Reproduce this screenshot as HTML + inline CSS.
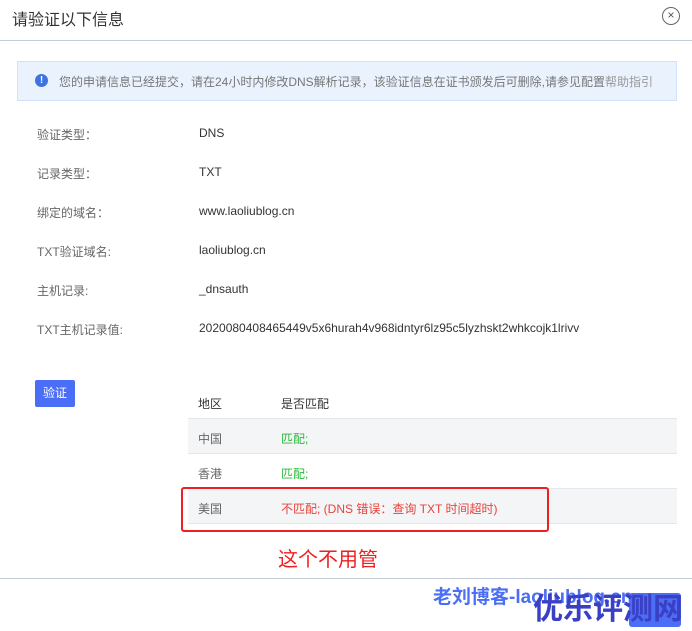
<!DOCTYPE html>
<html><head><meta charset="utf-8"><style>
*{margin:0;padding:0;box-sizing:border-box}
body{width:692px;height:631px;background:#fff;position:relative;overflow:hidden;font-family:"Liberation Sans","Noto Sans CJK SC",sans-serif;color:#333;font-size:12px}
.a{position:absolute;white-space:nowrap}
.lbl{color:#666}
</style></head><body>
<div class="a" style="left:12px;top:6px;font-size:16px;color:#333">请验证以下信息</div>
<div class="a" style="left:662px;top:7px;width:18px;height:18px;border:1.5px solid #666;border-radius:50%;font-size:12px;line-height:15px;text-align:center;color:#555">×</div>
<div class="a" style="left:0;top:40px;width:692px;height:1px;background:#c4ccd9"></div>
<div class="a" style="left:17px;top:61px;width:660px;height:40px;background:#eaf2fd;border:1px solid #cfe2fa"></div>
<div class="a" style="left:35px;top:74px;width:13px;height:13px;border-radius:50%;background:#3f73e0;color:#fff;font-size:10px;line-height:13px;text-align:center;font-weight:bold">!</div>
<div class="a" style="left:59px;top:73px;font-size:12px;color:#777">您的申请信息已经提交，请在24小时内修改DNS解析记录，该验证信息在证书颁发后可删除,请参见配置<span style="color:#999">帮助指引</span></div>
<div class="a lbl" style="left:37px;top:126px">验证类型：</div><div class="a" style="left:199px;top:126px">DNS</div>
<div class="a lbl" style="left:37px;top:165px">记录类型：</div><div class="a" style="left:199px;top:165px">TXT</div>
<div class="a lbl" style="left:37px;top:204px">绑定的域名：</div><div class="a" style="left:199px;top:204px">www.laoliublog.cn</div>
<div class="a lbl" style="left:37px;top:243px">TXT验证域名:</div><div class="a" style="left:199px;top:243px">laoliublog.cn</div>
<div class="a lbl" style="left:37px;top:282px">主机记录:</div><div class="a" style="left:199px;top:282px">_dnsauth</div>
<div class="a lbl" style="left:37px;top:321px">TXT主机记录值:</div><div class="a" style="left:199px;top:321px">2020080408465449v5x6hurah4v968idntyr6lz95c5lyzhskt2whkcojk1lrivv</div>
<div class="a" style="left:35px;top:380px;width:40px;height:27px;background:#4a6ef5;border-radius:2px;color:#fff;line-height:27px;text-align:center;font-size:12px">验证</div>
<div class="a" style="left:188px;top:384px;width:489px;height:140px">
<div style="height:35px;border-bottom:1px solid #e3e6eb;position:relative"><span class="a" style="left:10px;top:11px">地区</span><span class="a" style="left:93px;top:11px">是否匹配</span></div>
<div style="height:35px;background:#f4f5f7;border-bottom:1px solid #e3e6eb;position:relative"><span class="a" style="left:10px;top:11px;color:#666">中国</span><span class="a" style="left:93px;top:11px;color:#2bbb3c">匹配;</span></div>
<div style="height:35px;border-bottom:1px solid #e3e6eb;position:relative"><span class="a" style="left:10px;top:11px;color:#666">香港</span><span class="a" style="left:93px;top:11px;color:#2bbb3c">匹配;</span></div>
<div style="height:35px;background:#f4f5f7;border-bottom:1px solid #e3e6eb;position:relative"><span class="a" style="left:10px;top:11px;color:#666">美国</span><span class="a" style="left:93px;top:11px;color:#e8423a">不匹配; (DNS 错误：查询 TXT 时间超时)</span></div>
</div>
<div class="a" style="left:181px;top:487px;width:368px;height:45px;border:2.5px solid #f01f1f;border-radius:3px"></div>
<div class="a" style="left:278px;top:543px;font-size:20px;color:#f01f1f">这个不用管</div>
<div class="a" style="left:0;top:578px;width:692px;height:1px;background:#c4ccd9"></div>
<div class="a" style="left:629px;top:593px;width:52px;height:34px;background:#4a6ef5;border-radius:3px"></div>
<div class="a" style="left:433px;top:582px;font-size:19px;font-weight:bold;color:#4a6ef5">老刘博客-laoliublog.cn</div>
<div class="a" style="left:533px;top:584px;font-size:30px;font-weight:bold;color:#3a3fc4">优乐评测网</div>
</body></html>
